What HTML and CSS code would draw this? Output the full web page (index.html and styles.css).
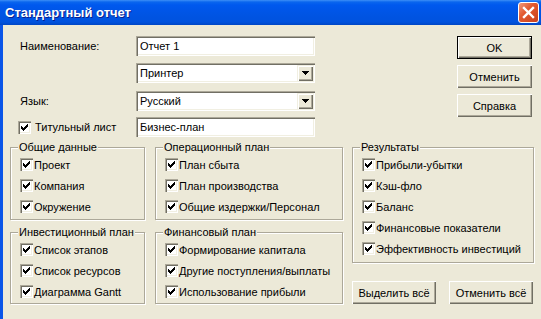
FILE: index.html
```html
<!DOCTYPE html>
<html lang="ru">
<head>
    <meta charset="UTF-8">
    <title>Стандартный отчет</title>
    <link rel="stylesheet" href="styles.css">
</head>
<body>
    <div class="window">
        <div class="titlebar">
            <span class="title">Стандартный отчет</span>
            <span class="close">
                <svg width="13" height="13" viewBox="0 0 13 13"><path d="M2 2L11 11M11 2L2 11" stroke="#fff" stroke-width="2.4" stroke-linecap="square"/></svg>
            </span>
        </div>

        <div class="client">
            <div class="top">
                <div class="form">
                    <div class="row">
                        <span class="label">Наименование:</span>
                        <div class="field">Отчет 1</div>
                    </div>
                    <div class="row">
                        <span class="label"></span>
                        <div class="field">Принтер<span class="drop"><svg width="7" height="4" viewBox="0 0 7 4"><path d="M0 0h7v1H0zM1 1h5v1H1zM2 2h3v1H2zM3 3h1v1H3z"/></svg></span></div>
                    </div>
                    <div class="row row-lang">
                        <span class="label">Язык:</span>
                        <div class="field">Русский<span class="drop"><svg width="7" height="4" viewBox="0 0 7 4"><path d="M0 0h7v1H0zM1 1h5v1H1zM2 2h3v1H2zM3 3h1v1H3z"/></svg></span></div>
                    </div>
                    <div class="row row-cover">
                        <span class="label label-check"><span class="check"><svg width="13" height="13" viewBox="0 0 13 13"><path d="M9 3h1v1H9zM8 4h2v1H8zM3 5h1v1H3zM7 5h3v1H7zM3 6h2v1H3zM6 6h3v1H6zM3 7h5v1H3zM4 8h3v1H4zM5 9h1v1H5z"/></svg></span>Титульный лист</span>
                        <div class="field">Бизнес-план</div>
                    </div>
                </div>

                <div class="actions">
                    <div class="btn btn-default">OK</div>
                    <div class="btn">Отменить</div>
                    <div class="btn">Справка</div>
                </div>
            </div>

            <div class="groups">
                <div class="group">
                    <span class="legend">Общие данные</span>
                    <div class="opt"><span class="check"><svg width="13" height="13" viewBox="0 0 13 13"><path d="M9 3h1v1H9zM8 4h2v1H8zM3 5h1v1H3zM7 5h3v1H7zM3 6h2v1H3zM6 6h3v1H6zM3 7h5v1H3zM4 8h3v1H4zM5 9h1v1H5z"/></svg></span>Проект</div>
                    <div class="opt"><span class="check"><svg width="13" height="13" viewBox="0 0 13 13"><path d="M9 3h1v1H9zM8 4h2v1H8zM3 5h1v1H3zM7 5h3v1H7zM3 6h2v1H3zM6 6h3v1H6zM3 7h5v1H3zM4 8h3v1H4zM5 9h1v1H5z"/></svg></span>Компания</div>
                    <div class="opt"><span class="check"><svg width="13" height="13" viewBox="0 0 13 13"><path d="M9 3h1v1H9zM8 4h2v1H8zM3 5h1v1H3zM7 5h3v1H7zM3 6h2v1H3zM6 6h3v1H6zM3 7h5v1H3zM4 8h3v1H4zM5 9h1v1H5z"/></svg></span>Окружение</div>
                </div>

                <div class="group">
                    <span class="legend">Операционный план</span>
                    <div class="opt"><span class="check"><svg width="13" height="13" viewBox="0 0 13 13"><path d="M9 3h1v1H9zM8 4h2v1H8zM3 5h1v1H3zM7 5h3v1H7zM3 6h2v1H3zM6 6h3v1H6zM3 7h5v1H3zM4 8h3v1H4zM5 9h1v1H5z"/></svg></span>План сбыта</div>
                    <div class="opt"><span class="check"><svg width="13" height="13" viewBox="0 0 13 13"><path d="M9 3h1v1H9zM8 4h2v1H8zM3 5h1v1H3zM7 5h3v1H7zM3 6h2v1H3zM6 6h3v1H6zM3 7h5v1H3zM4 8h3v1H4zM5 9h1v1H5z"/></svg></span>План производства</div>
                    <div class="opt"><span class="check"><svg width="13" height="13" viewBox="0 0 13 13"><path d="M9 3h1v1H9zM8 4h2v1H8zM3 5h1v1H3zM7 5h3v1H7zM3 6h2v1H3zM6 6h3v1H6zM3 7h5v1H3zM4 8h3v1H4zM5 9h1v1H5z"/></svg></span>Общие издержки/Персонал</div>
                </div>

                <div class="results-col">
                    <div class="group group-results">
                        <span class="legend">Результаты</span>
                        <div class="opt"><span class="check"><svg width="13" height="13" viewBox="0 0 13 13"><path d="M9 3h1v1H9zM8 4h2v1H8zM3 5h1v1H3zM7 5h3v1H7zM3 6h2v1H3zM6 6h3v1H6zM3 7h5v1H3zM4 8h3v1H4zM5 9h1v1H5z"/></svg></span>Прибыли-убытки</div>
                        <div class="opt"><span class="check"><svg width="13" height="13" viewBox="0 0 13 13"><path d="M9 3h1v1H9zM8 4h2v1H8zM3 5h1v1H3zM7 5h3v1H7zM3 6h2v1H3zM6 6h3v1H6zM3 7h5v1H3zM4 8h3v1H4zM5 9h1v1H5z"/></svg></span>Кэш-фло</div>
                        <div class="opt"><span class="check"><svg width="13" height="13" viewBox="0 0 13 13"><path d="M9 3h1v1H9zM8 4h2v1H8zM3 5h1v1H3zM7 5h3v1H7zM3 6h2v1H3zM6 6h3v1H6zM3 7h5v1H3zM4 8h3v1H4zM5 9h1v1H5z"/></svg></span>Баланс</div>
                        <div class="opt"><span class="check"><svg width="13" height="13" viewBox="0 0 13 13"><path d="M9 3h1v1H9zM8 4h2v1H8zM3 5h1v1H3zM7 5h3v1H7zM3 6h2v1H3zM6 6h3v1H6zM3 7h5v1H3zM4 8h3v1H4zM5 9h1v1H5z"/></svg></span>Финансовые показатели</div>
                        <div class="opt"><span class="check"><svg width="13" height="13" viewBox="0 0 13 13"><path d="M9 3h1v1H9zM8 4h2v1H8zM3 5h1v1H3zM7 5h3v1H7zM3 6h2v1H3zM6 6h3v1H6zM3 7h5v1H3zM4 8h3v1H4zM5 9h1v1H5z"/></svg></span>Эффективность инвестиций</div>
                    </div>
                    <div class="bulk">
                        <div class="btn btn-wide">Выделить всё</div>
                        <div class="btn btn-wide">Отменить всё</div>
                    </div>
                </div>

                <div class="group">
                    <span class="legend">Инвестиционный план</span>
                    <div class="opt"><span class="check"><svg width="13" height="13" viewBox="0 0 13 13"><path d="M9 3h1v1H9zM8 4h2v1H8zM3 5h1v1H3zM7 5h3v1H7zM3 6h2v1H3zM6 6h3v1H6zM3 7h5v1H3zM4 8h3v1H4zM5 9h1v1H5z"/></svg></span>Список этапов</div>
                    <div class="opt"><span class="check"><svg width="13" height="13" viewBox="0 0 13 13"><path d="M9 3h1v1H9zM8 4h2v1H8zM3 5h1v1H3zM7 5h3v1H7zM3 6h2v1H3zM6 6h3v1H6zM3 7h5v1H3zM4 8h3v1H4zM5 9h1v1H5z"/></svg></span>Список ресурсов</div>
                    <div class="opt"><span class="check"><svg width="13" height="13" viewBox="0 0 13 13"><path d="M9 3h1v1H9zM8 4h2v1H8zM3 5h1v1H3zM7 5h3v1H7zM3 6h2v1H3zM6 6h3v1H6zM3 7h5v1H3zM4 8h3v1H4zM5 9h1v1H5z"/></svg></span>Диаграмма Gantt</div>
                </div>

                <div class="group">
                    <span class="legend">Финансовый план</span>
                    <div class="opt"><span class="check"><svg width="13" height="13" viewBox="0 0 13 13"><path d="M9 3h1v1H9zM8 4h2v1H8zM3 5h1v1H3zM7 5h3v1H7zM3 6h2v1H3zM6 6h3v1H6zM3 7h5v1H3zM4 8h3v1H4zM5 9h1v1H5z"/></svg></span>Формирование капитала</div>
                    <div class="opt"><span class="check"><svg width="13" height="13" viewBox="0 0 13 13"><path d="M9 3h1v1H9zM8 4h2v1H8zM3 5h1v1H3zM7 5h3v1H7zM3 6h2v1H3zM6 6h3v1H6zM3 7h5v1H3zM4 8h3v1H4zM5 9h1v1H5z"/></svg></span>Другие поступления/выплаты</div>
                    <div class="opt"><span class="check"><svg width="13" height="13" viewBox="0 0 13 13"><path d="M9 3h1v1H9zM8 4h2v1H8zM3 5h1v1H3zM7 5h3v1H7zM3 6h2v1H3zM6 6h3v1H6zM3 7h5v1H3zM4 8h3v1H4zM5 9h1v1H5z"/></svg></span>Использование прибыли</div>
                </div>
            </div>
        </div>
    </div>
</body>
</html>
```

FILE: styles.css
```css
* {
    margin: 0;
    padding: 0;
    box-sizing: border-box;
}

body {
    width: 541px;
    height: 319px;
    overflow: hidden;
    font-family: "Liberation Sans", Arial, sans-serif;
    font-size: 11px;
    color: #000;
    background: #ECE9D8;
}

.window {
    height: 319px;
    display: flex;
    flex-direction: column;
}

/* caption */
.titlebar {
    height: 25px;
    display: flex;
    align-items: center;
    justify-content: space-between;
    padding: 0 2px 0 5px;
    background: linear-gradient(#3D8FF7 0, #0A66EE 2px, #0058EE 5px, #0054E3 60%, #0052DE 88%, #0046C4 100%);
}

.title {
    color: #fff;
    font-weight: bold;
    font-size: 13px;
    text-shadow: 1px 1px 0 #0A1E8C;
}

.close {
    width: 21px;
    height: 21px;
    border: 1px solid #fff;
    border-radius: 3px;
    background: linear-gradient(135deg, #F29A7C, #E25A30 40%, #C8401C);
    display: flex;
    align-items: center;
    justify-content: center;
}

.client {
    flex: 1;
    border-left: 3px solid #0A55E8;
    padding: 11px 9px 0 7px;
}

/* top form */
.top {
    display: flex;
    padding-left: 8px;
}

.form {
    display: flex;
    flex-direction: column;
}

.row {
    display: flex;
    align-items: center;
    height: 20px;
}

.row + .row {
    margin-top: 7px;
}

.row.row-lang {
    margin-top: 8px;
}

.row.row-cover {
    margin-top: 6px;
}

.label {
    width: 118px;
    padding-left: 2px;
}

.label-check {
    display: flex;
    align-items: center;
    padding-left: 0;
}

.label-check .check {
    margin-right: 4px;
}

.field {
    width: 179px;
    height: 20px;
    display: flex;
    align-items: center;
    padding: 0 4px;
    background: #fff;
    box-shadow: inset 1px 1px #ACA899, inset 2px 2px #716F64, inset -1px -1px #fff, inset -2px -2px #F1EFE2;
}

.drop {
    width: 16px;
    height: 16px;
    margin-left: auto;
    margin-right: -2px;
    display: flex;
    align-items: center;
    justify-content: center;
    background: #ECE9D8;
    box-shadow: inset 1px 1px #F1EFE2, inset 2px 2px #fff, inset -1px -1px #716F64, inset -2px -2px #ACA899;
}

.drop svg {
    shape-rendering: crispEdges;
}

.actions {
    margin-left: auto;
    display: flex;
    flex-direction: column;
    gap: 6px;
}

.btn {
    width: 75px;
    height: 23px;
    display: flex;
    align-items: center;
    justify-content: center;
    background: #ECE9D8;
    box-shadow: inset 1px 1px #fff, inset -1px -1px #716F64, inset -2px -2px #ACA899;
}

.btn-default {
    border: 1px solid #000;
}

.btn-wide {
    width: 84px;
}

/* group boxes */
.groups {
    display: grid;
    grid-template-columns: 135px 188px 181px;
    grid-template-rows: 73px 72px;
    column-gap: 10px;
    row-gap: 12px;
    margin-top: 10px;
}

.group {
    position: relative;
    border: 1px solid #ACA899;
    box-shadow: 1px 1px 0 #fff, inset 1px 1px 0 #fff;
    padding: 6px 0 0 9px;
}

.legend {
    position: absolute;
    top: -7px;
    left: 7px;
    padding: 0 1px;
    line-height: 13px;
    background: #ECE9D8;
    white-space: nowrap;
}

.results-col {
    grid-column: 3;
    grid-row: 1 / span 2;
    margin-left: -1px;
    display: flex;
    flex-direction: column;
}

.group-results {
    height: 116px;
}

.bulk {
    margin-top: auto;
    padding-right: 1px;
    display: flex;
    justify-content: space-between;
}

.opt {
    display: flex;
    align-items: center;
    height: 21px;
    white-space: nowrap;
}

.check {
    width: 13px;
    height: 13px;
    flex: none;
    margin-right: 1px;
    background: #fff;
    box-shadow: inset 1px 1px #ACA899, inset 2px 2px #716F64, inset -1px -1px #fff, inset -2px -2px #F1EFE2;
}

.check svg {
    display: block;
    shape-rendering: crispEdges;
}
```
